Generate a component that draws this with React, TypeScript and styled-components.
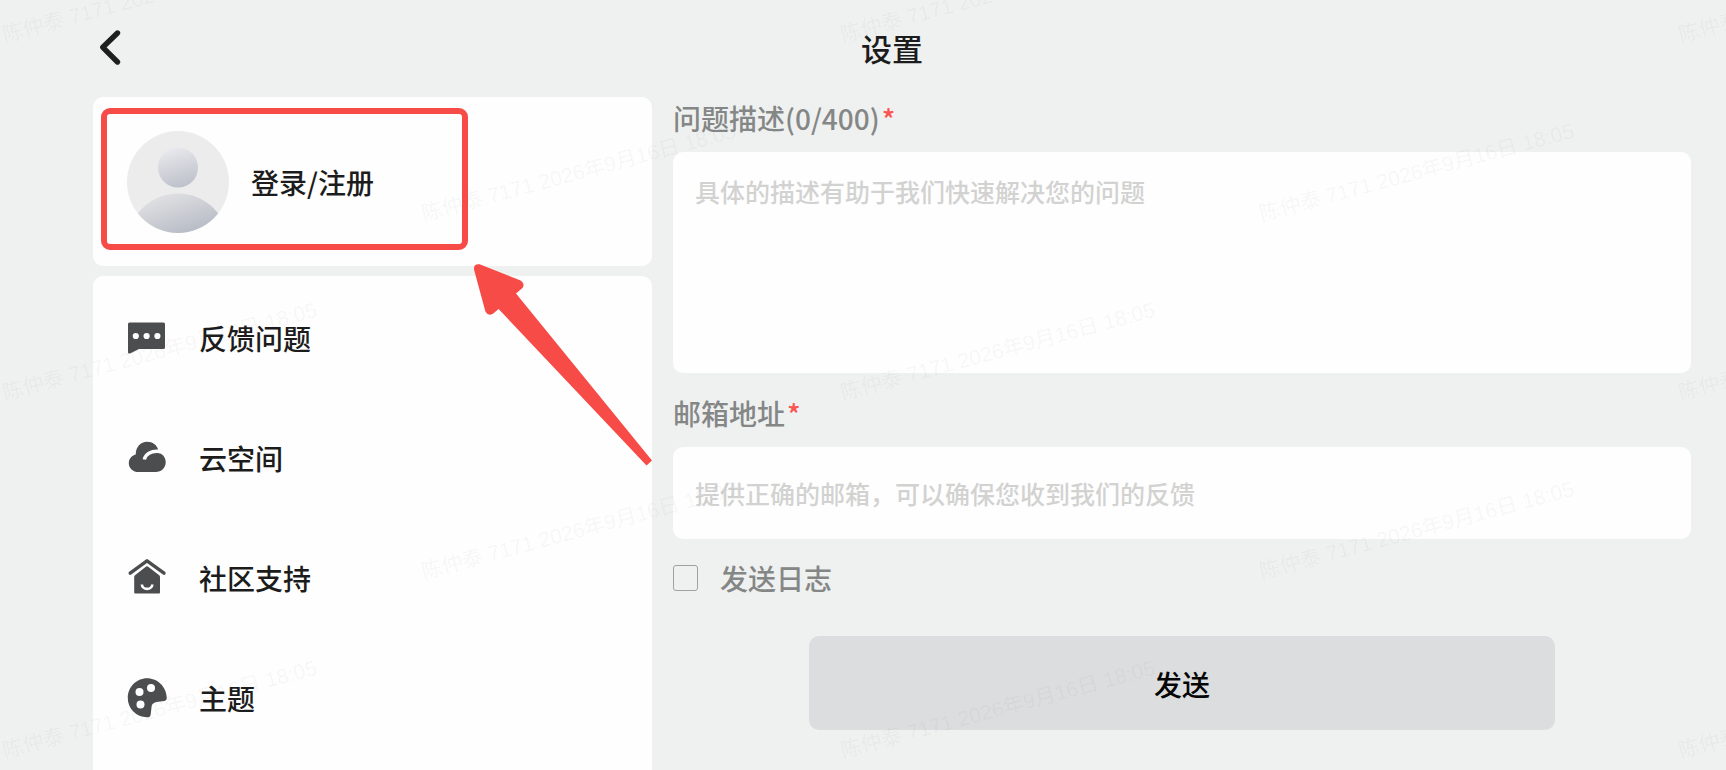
import React from 'react';
import styled, { createGlobalStyle } from 'styled-components';

const GlobalStyle = createGlobalStyle`
  *, *::before, *::after { box-sizing: border-box; }
  body {
    margin: 0;
    background: #eff1f1;
    color: #1c1c1c;
    font-family: "Noto Sans CJK SC", "Noto Sans", sans-serif;
    font-weight: 500;
  }
  button, input, textarea { font: inherit; color: inherit; }
`;

const ACCENT = '#f74b48';

const Page = styled.div`
  position: relative;
  display: flex;
  flex-direction: column;
  min-height: 100vh;
  overflow: hidden;
`;

const Header = styled.header`
  display: grid;
  grid-template-columns: 1fr auto 1fr;
  align-items: center;
  height: 97px;
  padding: 0 35px 3px 93px;
`;

const BackButton = styled.button`
  display: flex;
  justify-self: start;
  padding: 4px;
  border: 0;
  background: none;
  cursor: pointer;
`;

const Title = styled.h1`
  margin: 0;
  padding-top: 2px;
  font-size: 31px;
  line-height: 44px;
  font-weight: 500;
`;

const Content = styled.main`
  flex: 1;
  display: grid;
  grid-template-columns: minmax(0, 559fr) minmax(0, 1018fr);
  gap: 21px;
  padding: 0 35px 0 93px;
`;

const Sidebar = styled.aside`
  display: flex;
  flex-direction: column;
  gap: 10px;
`;

const LoginCard = styled.section`
  display: flex;
  align-items: center;
  height: 169px;
  padding: 0 34px;
  border-radius: 10px;
  background: #fefefe;
`;

const LoginButton = styled.button`
  display: flex;
  align-items: center;
  gap: 22px;
  padding: 0;
  border: 0;
  background: none;
  font-size: 28px;
  line-height: 40px;
  cursor: pointer;
`;

const Menu = styled.nav`
  flex: 1;
  padding: 2px 0;
  border-radius: 10px 10px 0 0;
  background: #fefefe;
`;

const MenuItem = styled.a`
  display: flex;
  align-items: center;
  gap: 32px;
  height: 120px;
  padding: 0 34px;
  color: inherit;
  font-size: 28px;
  line-height: 40px;
  text-decoration: none;
`;

const Form = styled.form`
  display: flex;
  flex-direction: column;
`;

const FieldLabel = styled.label`
  margin-bottom: 13px;
  color: #858786;
  font-size: 28px;
  line-height: 42px;
`;

const Required = styled.span`
  margin-left: 2px;
  color: #fb5553;
`;

const TextArea = styled.textarea`
  display: block;
  width: 100%;
  height: 221px;
  margin: 0 0 19px;
  padding: 21px 22px;
  border: 0;
  border-radius: 10px;
  background: #fefefe;
  font-size: 25px;
  line-height: 36px;
  resize: none;
  outline: none;
  &::placeholder { color: #d2d2d1; opacity: 1; }
`;

const TextInput = styled.input`
  width: 100%;
  height: 92px;
  padding: 0 22px;
  border: 0;
  border-radius: 10px;
  background: #fefefe;
  font-size: 25px;
  outline: none;
  &::placeholder { color: #d2d2d1; opacity: 1; }
`;

const CheckRow = styled.label`
  display: flex;
  align-items: center;
  align-self: flex-start;
  gap: 22px;
  margin: 17px 0 36px;
  color: #858786;
  font-size: 28px;
  line-height: 44px;
`;

const CheckBox = styled.input`
  appearance: none;
  width: 25px;
  height: 26px;
  margin: 0;
  border: 1px solid #a0a2a1;
  border-radius: 3px;
  &:checked { background: #8b8d8c; }
`;

const SendButton = styled.button`
  align-self: center;
  width: 73.3%;
  height: 94px;
  padding: 2px 0 0;
  border: 0;
  border-radius: 10px;
  background: #dcddde;
  color: #060606;
  font-size: 28px;
  cursor: pointer;
`;

const WatermarkLayer = styled.div`
  position: absolute;
  inset: 0;
  overflow: hidden;
  pointer-events: none;
`;

const Mark = styled.span<{ $x: number; $y: number }>`
  position: absolute;
  left: ${(p) => p.$x}px;
  top: ${(p) => p.$y}px;
  color: rgba(31, 35, 41, 0.05);
  font-family: "Liberation Sans", "Noto Sans CJK SC", sans-serif;
  font-size: 21px;
  font-weight: 400;
  line-height: 24px;
  white-space: nowrap;
  transform: rotate(-15deg);
  transform-origin: left bottom;
`;

const AnnotationLayer = styled.div`
  position: absolute;
  top: 97px;
  left: 93px;
  pointer-events: none;
`;

const Highlight = styled.div`
  position: absolute;
  top: 11px;
  left: 8px;
  width: 367px;
  height: 142px;
  border: 6px solid ${ACCENT};
  border-radius: 9px;
`;

const Arrow = styled.svg`
  position: absolute;
  top: 163px;
  left: 377px;
`;

const Avatar = () => (
  <svg width="102" height="102" viewBox="0 0 102 102" aria-hidden="true">
    <defs>
      <linearGradient id="head" x1="0.35" y1="0" x2="0.65" y2="1">
        <stop offset="0" stopColor="#e9e9ee" />
        <stop offset="1" stopColor="#bcc0c8" />
      </linearGradient>
      <linearGradient id="body" gradientUnits="userSpaceOnUse" x1="42" y1="62" x2="56" y2="104">
        <stop offset="0" stopColor="#e0e0e3" />
        <stop offset="1" stopColor="#b7bcc5" />
      </linearGradient>
      <clipPath id="disc"><circle cx="51" cy="51" r="51" /></clipPath>
    </defs>
    <g clipPath="url(#disc)">
      <rect width="102" height="102" fill="#ececec" />
      <circle cx="51" cy="36.5" r="20" fill="url(#head)" />
      <ellipse cx="51" cy="112" rx="50" ry="49.5" fill="url(#body)" />
    </g>
  </svg>
);

const iconProps = { width: 40, height: 40, viewBox: '0 0 40 40', 'aria-hidden': true } as const;
const INK = '#4c4d4e';

const FeedbackIcon = () => (
  <svg {...iconProps}>
    <path d="M2.500 4.500H36.500a1.500 1.500 0 0 1 1.500 1.500V29.500a1.500 1.500 0 0 1-1.500 1.500H12L3 35.400a1.300 1.300 0 0 1-2-1.100V6a1.500 1.500 0 0 1 1.500-1.500z" fill={INK} />
    <circle cx="8.800" cy="18" r="3.100" fill="#fefefe" />
    <circle cx="19.600" cy="18" r="3.100" fill="#fefefe" />
    <circle cx="30.400" cy="18" r="3.100" fill="#fefefe" />
  </svg>
);

const CloudIcon = () => (
  <svg {...iconProps}>
    <path d="M11.500 34C6 34 1.800 30.300 1.800 25.200c0-4.300 2.900-7.600 6.900-8.700C8.800 9 13.500 3.800 20.200 3.800c5.500 0 9.600 3.100 11 8.100L30.500 14.700C35.500 15.300 38.700 19.300 38.700 24c0 6-4.400 10-9.900 10z" fill={INK} />
    <path d="M17.300 21.500C18.300 16.500 23.500 12.300 33 13.500" fill="none" stroke="#fefefe" strokeWidth="3.400" />
  </svg>
);

const HouseIcon = () => (
  <svg {...iconProps}>
    <path d="M3.200 15.200L20 2.800L37 15.200" fill="none" stroke={INK} strokeWidth="3.400" strokeLinecap="round" strokeLinejoin="round" />
    <path d="M20 8.300Q20.800 8.300 21.500 8.900L32.200 17.300Q33 18 33 19V34.500a1 1 0 0 1-1 1H8.200a1 1 0 0 1-1-1V19Q7.200 18 8 17.300L18.500 8.900Q19.200 8.300 20 8.300z" fill={INK} />
    <path d="M14.900 26.500a5.200 4.400 0 0 0 10.400 0" fill="none" stroke="#fefefe" strokeWidth="2.600" />
  </svg>
);

const PaletteIcon = () => (
  <svg {...iconProps}>
    <path d="M20 .300C30.800.300 39.500 9 39.800 20c0 1.600-.9 2.700-2.500 2.900L29.500 24c-3.200.6-4.700 2.200-5 5L23.700 36.500C23.400 38.600 22 39.500 20 39.300 9.300 39 .800 30.800.800 20S9.300.300 20 .300z" fill={INK} />
    <circle cx="24" cy="10" r="4" fill="#fefefe" />
    <circle cx="12.500" cy="14" r="4" fill="#fefefe" />
    <circle cx="13.500" cy="26.500" r="4" fill="#fefefe" />
  </svg>
);

const menu = [
  { label: '反馈问题', Icon: FeedbackIcon },
  { label: '云空间', Icon: CloudIcon },
  { label: '社区支持', Icon: HouseIcon },
  { label: '主题', Icon: PaletteIcon },
];

const MARK_TEXT = '陈仲泰 7171 2026年9月16日 18:05';
const marks = Array.from({ length: 5 }, (_, row) =>
  Array.from({ length: row % 2 ? 2 : 3 }, (_, col) => ({
    x: 6 + col * 838 + (row % 2) * 419,
    y: 23 + row * 179,
  })),
).flat();

export default function App() {
  return (
    <Page>
      <GlobalStyle />
      <Header>
        <BackButton type="button" aria-label="返回">
          <svg width="26" height="38" viewBox="0 0 26 38" aria-hidden="true">
            <path d="M20.500 5L5.800 19.300L20.500 34" fill="none" stroke="#1f1f1f" strokeWidth="5.400" strokeLinecap="round" strokeLinejoin="round" />
          </svg>
        </BackButton>
        <Title>设置</Title>
      </Header>
      <Content>
        <Sidebar>
          <LoginCard>
            <LoginButton type="button">
              <Avatar />
              登录/注册
            </LoginButton>
          </LoginCard>
          <Menu>
            {menu.map(({ label, Icon }) => (
              <MenuItem key={label} href="#">
                <Icon />
                {label}
              </MenuItem>
            ))}
          </Menu>
        </Sidebar>
        <Form onSubmit={(e) => e.preventDefault()}>
          <FieldLabel htmlFor="description">
            问题描述(0/400)<Required>*</Required>
          </FieldLabel>
          <TextArea id="description" maxLength={400} placeholder="具体的描述有助于我们快速解决您的问题" />
          <FieldLabel htmlFor="email">
            邮箱地址<Required>*</Required>
          </FieldLabel>
          <TextInput id="email" type="email" placeholder="提供正确的邮箱，可以确保您收到我们的反馈" />
          <CheckRow>
            <CheckBox type="checkbox" />
            发送日志
          </CheckRow>
          <SendButton type="submit">发送</SendButton>
        </Form>
      </Content>
      <WatermarkLayer aria-hidden="true">
        {marks.map(({ x, y }) => (
          <Mark key={`${x}-${y}`} $x={x} $y={y}>{MARK_TEXT}</Mark>
        ))}
      </WatermarkLayer>
      <AnnotationLayer>
        <Highlight />
        <Arrow width="184" height="210" viewBox="470 260 184 210" aria-hidden="true">
          <path
            d="M479.600 264.300L520 280.200Q525.500 283.500 522.500 288L516 293.500L652 460.500L646.500 465.500L498.600 309L493 313.700Q488 316.500 485.400 311.500L474 269.500Q473.500 263.500 479.600 264.300z"
            fill={ACCENT}
          />
        </Arrow>
      </AnnotationLayer>
    </Page>
  );
}
